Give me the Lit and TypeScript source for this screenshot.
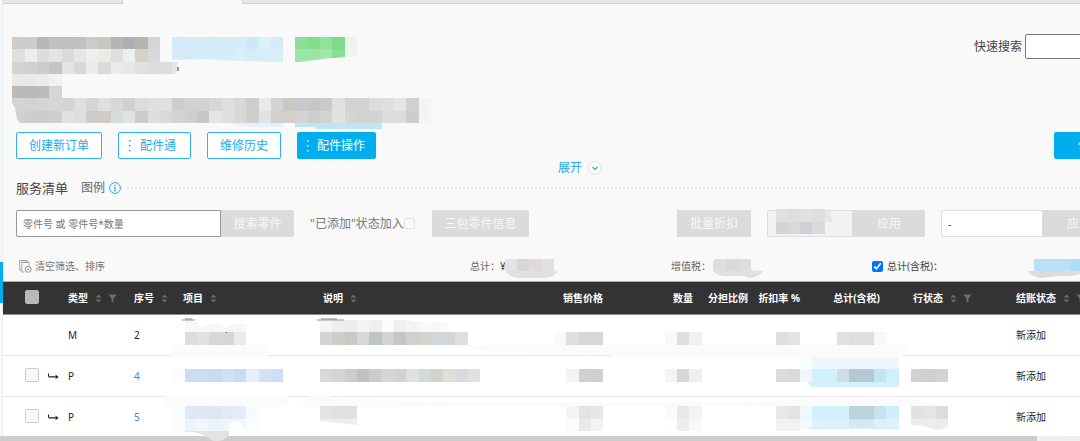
import { LitElement, html, svg, css, nothing } from "lit";
import { customElement, property } from "lit/decorators.js";

/* A strip of mosaic cells: column, row, then one colour per cell. */
type Strip = [number, number, string];

const edge = (n: number) => Math.round(n * 12.31);

const HEAD_STRIPS: Strip[] = [
  [1, 3, "cfcdca c9cdcf b8b7b4 c2c0be bdc0bf c0c1c3 cbcbcb c7c6c1 b6b4b5 acb0b3 b6b5b1 d3d5d7"],
  [1, 4, "dfdfdf ebeeee dddddb e4e4e4 d8dadd e6e6e6 efeeec ebebe8 dfdfdf ebefed d3d1cc d6dadd"],
  [1, 5, "d4d4d3 d1d1d0 cdcdcd c4c4c4 e3e3e1 d7d8db ecebe9 d8dadd e9ebec e7e8e6 e1e1df dcdcdc dcdedd"],
  [1, 6, "e9e9e8 e9e9e9 ebebeb f2f2f2"],
  [1, 7, "bcbab7 b9b8ba bdbbb9 d2d6d6"],
  [1, 8, "d4d4d4 d2d2d2 d4d4d3 d6d6d4 d2d5d5 dedede d5d5d5 dfdfdf d5d8d8 cfd0d2 dedcda dfe0e2 dfe0e2 cfcecd d3d2d1 d3d2d1 d6d7d9 dfdfdd dad8d6 cdcecd e8eae9 d5d4d2 c9c8c6 c8c9cc c6c8c7 cacaca dfe1e0 d3d2d0 d3d2d0 dcdcdc e0dfdd e5e5e5 d2d1cf f3f4f6"],
  [1, 9, "d0d0d0 cdcdcd cdcdcd cfcfcf e2e2e2 dedede cdcccc cecbc9 d9dcdc e1e1de cbccce dfdddb d7d9db d5d4d2 d0cfce c8c8c8 e3e5e7 dfdfdb dad8d6 cfcfcf e0e1e3 d1d0ce d1d0ce d6d4d1 cdcecd d2d3d5 e1e2e2 d6d5d4 d2d2d2 d2d2d2 dcdcda dcdcda cdcdcb f3f4f6"],
  [14, 3, "d3ebf8 d5edf8 d5edf8 d4ebf7 d5edf8 d5edf8 cbeaf6 def1f9 d3ecf8"],
  [14, 4, "d5ecf7 d5ecf7 d5edf8 d5edf8 d5edf8 dbeff9 d5edf8 d5edf8 d7eef8"],
  [24, 3, "8ddf97 84dc8d 93e29c 7edb87 ecf5ed"],
  [24, 4, "9de5a6 9be4a4 a1e6a9 88df92 eff6f0"],
];

const BODY_STRIPS: Strip[] = [
  [63, 17, "e0e0e0 dedede e1e1e1 dfdfdf"],
  [63, 18, "d7d3d2 dbd9d7 ced0d6 d8dadb"],
  [41, 21, "e3e4e6 d7d7d5 dfdad9 dee0e1"],
  [58, 21, "dbe0de d9dad9 dddddd"],
  [84, 21, "b9e0f5 b9e0f5 b9e0f5 aedcf6 cde8f7"],
  [15, 27, "dcdedb e2e2e0 d8d7d6 d8d6d5 e7ebea"],
  [26, 26, "f4f4f4 eeeeee ebeeed f4f4f1 efefef fcfcfc efefef f3f5f5 fafafa f8f8f8 fafafa fcfcfc"],
  [26, 27, "d3d4d3 cdcec6 c9cac3 d4d8d8 bec3c4 d1d2d3 c7c5c1 d0d0d1 d7d2cc d1d6da d5d6d4 dededf"],
  [45, 27, "fafaf8 dfdfdf d6d7d9 d7d8d6"],
  [54, 27, "fbf7f1 dce0e1 f0f2f2"],
  [63, 27, "dedede e3e3e2"],
  [68, 27, "e4e2e0 dedede dededd f6f8f7"],
  [14, 30, "fafcff ccddf3 ccddf3 c8daf2 d1e1f5 c8dbf4 e7eff9 d4e3f4 cddff4"],
  [26, 30, "d8dad9 d7d2d7 cdcdcc c1c1c0 cccccc d6d6d6 d2d2d1 dfe0e1 d5d9d9 d2d1d0 dedfd9 d7dbdf e1e1df"],
  [46, 30, "f3f3ef d0cfd1 cfcfd0"],
  [54, 30, "f5f4f3 d6d8d7 eef0f0"],
  [63, 30, "dcdcdb dadada"],
  [65, 29, "f9fdff ecf8fe ecf8fe ecf8fe ecf8fe ecf8fe ecf8fe ecf8fe"],
  [65, 30, "eef8fe d3f0fd d3f0fd cbdfe4 b3c9d5 b3c9d5 c3e4f0 d0effc"],
  [74, 30, "d1d1d1 d0cfcd d3d3d3"],
  [14, 33, "fafcff dfe8f5 dfe8f5 dde7f3 e2eaf6 e4ecf8 f8fafd"],
  [14, 34, "fafcff edf3fb f3f6fa ecf3fa f0f5fb f3f7fb fafcfe"],
  [26, 33, "e4e3e4 e1e1e0 e0e2e1"],
  [46, 33, "f5f4f2 e2e3e6 e7e8e6"],
  [46, 34, "fbfbf9 e9e9e9 f3f3f3"],
  [54, 33, "fbfaf6 e6e8e9 f3f3f4"],
  [54, 34, "fffefb eeeeef f7f8fa"],
  [63, 33, "e9e8e8 e4e3e4"],
  [63, 34, "f1f1f0 f1f1f0"],
  [65, 33, "eef8fe d3f0fd d3f0fd d3f0fd bdd4dd bdd4dd c3e4f0 d0effc"],
  [65, 34, "f2fafe dcf3fc dcf3fc dcf3fc d5e8f0 d5e8f0 dcf0f8 dcf3fc"],
  [74, 33, "e2e2e0 e5e6e1 dcddde"],
];

const tiles = (strips: Strip[]) =>
  strips.map(([col, row, colours]) =>
    colours.split(" ").map(
      (c, i) => svg`<rect x=${edge(col + i)} y=${edge(row)} width=${edge(col + i + 1) - edge(col + i)}
        height=${edge(row + 1) - edge(row)} fill=${"#" + c}></rect>`
    )
  );

const sorter = html`<svg class="sort" viewBox="0 0 7 9" aria-hidden="true">
  <path d="M3.5 0.5 6.5 3.6H0.5zM3.5 8.6 6.5 5.4H0.5z" fill="#6c6c6c"></path></svg>`;
const funnel = html`<svg class="funnel" viewBox="0 0 9 9" aria-hidden="true">
  <path d="M0.3 0.5H8.7L5.5 4.4V8.6L3.5 7.4V4.4z" fill="#6c6c6c"></path></svg>`;
const dots = html`<svg class="dots" viewBox="0 0 2 12" aria-hidden="true">
  <path d="M0 0h1.5v1.5H0zM0 5h1.5v1.5H0zM0 10h1.5v1.5H0z" fill="currentColor"></path></svg>`;
const branch = html`<svg class="branch" viewBox="0 0 12 8" aria-hidden="true">
  <path d="M1.5 1.5V3.4Q1.5 4.9 3 4.9H10.6" fill="none" stroke="#222" stroke-width="1.1"></path>
  <path d="M8.4 2.4 11.6 4.9 8.4 7.2 9 4.9z" fill="#222"></path></svg>`;

interface Item { type: string; no: string; child: boolean; status: string }

const ITEMS: Item[] = [
  { type: "M", no: "2", child: false, status: "新添加" },
  { type: "P", no: "4", child: true, status: "新添加" },
  { type: "P", no: "5", child: true, status: "新添加" },
];

@customElement("service-table")
export class ServiceTable extends LitElement {
  @property({ attribute: false }) items: Item[] = [];

  static styles = css`
    :host { display: block; background: #fff; }
    table { width: 100%; table-layout: fixed; border-collapse: separate; border-spacing: 0; }
    th, td { box-sizing: border-box; padding: 0; font-size: 10px; text-align: left; vertical-align: middle; white-space: nowrap; }
    th { height: 34px; background: #333; color: #fff; font-weight: 700;
      border-top: 1px solid #adadad; border-bottom: 1px solid #8c8c8c; }
    td { height: 41px; color: #222; border-bottom: 1px solid #e6e6e6; }
    .pick { padding: 0 0 2px 22px; }
    .right { text-align: right; }
    .line { padding-left: 33px; }
    .w-pick { width: 44px; } .w-arrow { width: 21px; } .w-type { width: 66px; }
    .w-no { width: 49px; } .w-item { width: 140px; } .w-desc { width: 180px; }
    .w-price { width: 100px; } .w-qty { width: 90px; } .w-share { width: 55px; }
    .w-rate { width: 52px; } .w-total { width: 80px; } .w-line { width: 136px; }
    .sort { width: 7px; height: 9px; margin-left: 7px; vertical-align: -1px; }
    .funnel { width: 9px; height: 9px; margin-left: 6px; vertical-align: -1px; }
    .branch { display: block; width: 12px; height: 8px; }
    input { appearance: none; display: block; box-sizing: border-box; width: 14px; height: 14px; margin: 0;
      border: 1px solid #ccc; border-radius: 2px; background: #f8f8f8; }
    th input { background: #b8b8b8; border-color: #b8b8b8; }
    a { color: #3a87d9; text-decoration: none; }
  `;

  render() {
    return html`<table>
      <colgroup>
        <col class="w-pick"><col class="w-arrow"><col class="w-type"><col class="w-no"><col class="w-item">
        <col class="w-desc"><col class="w-price"><col class="w-qty"><col class="w-share"><col class="w-rate">
        <col class="w-total"><col class="w-line"><col>
      </colgroup>
      <thead><tr>
        <th class="pick"><input type="checkbox" aria-label="全选"></th><th></th>
        <th>类型${sorter}${funnel}</th>
        <th>序号${sorter}</th>
        <th>项目${sorter}</th>
        <th>说明${sorter}</th>
        <th class="right">销售价格</th>
        <th class="right">数量</th>
        <th class="right">分担比例</th>
        <th class="right">折扣率 %</th>
        <th class="right">总计(含税)</th>
        <th class="line">行状态${sorter}${funnel}</th>
        <th>结账状态${sorter}${funnel}</th>
      </tr></thead>
      <tbody>${this.items.map(
        (it) => html`<tr>
          <td class="pick">${it.child ? html`<input type="checkbox" aria-label=${it.no}>` : nothing}</td>
          <td>${it.child ? branch : nothing}</td>
          <td>${it.type}</td>
          <td>${it.child ? html`<a href="#">${it.no}</a>` : it.no}</td>
          <td></td><td></td><td></td><td></td><td></td><td></td><td></td><td></td>
          <td>${it.status}</td>
        </tr>`
      )}</tbody>
    </table>`;
  }
}

@customElement("app-root")
export class AppRoot extends LitElement {
  static styles = css`
    :host { display: block; position: relative; height: 100vh; overflow: hidden; background: #f9f9f9;
      font-family: "Noto Sans", "Noto Sans CJK SC", sans-serif; font-size: 12px; line-height: 16px; color: #666; }
    * { box-sizing: border-box; }
    .frame { display: flex; flex-direction: column; height: 100%; }
    .body { display: flex; flex: 1; min-height: 0; }
    .rail { flex: none; width: 3px; border-right: 1px solid #e4f1fb; padding-top: 262px; }
    .mark { width: 3px; height: 41px; background: #00aeef; }
    .page { flex: 1; min-width: 1154px; overflow: hidden; }
    .tabs { display: flex; height: 4px; }
    .tab { flex: none; width: 120px; background: #e6e6e6; border: solid #ccd0d5; border-width: 0 1px 1px 0; }
    .rest { flex: 1; margin-left: 119px; background: #e6e6e6; border: solid #ccd0d5; border-width: 0 0 1px 1px; }
    .head { display: flex; justify-content: space-between; align-items: flex-start; margin: 30px 12px 0 9px; }
    .summary { display: block; width: 430px; height: 96px; }
    .quick { display: flex; align-items: center; gap: 3px; color: #444; }
    input, button { font: inherit; }
    .text { height: 27px; border: 1px solid #999; border-radius: 2px; background: #fff; padding: 0 6px; font-size: 10px; min-width: 0; }
    .text::placeholder { color: #777; opacity: 1; }
    .quick .text { width: 120px; height: 25px; border-color: #777; }
    .actions { display: flex; gap: 16px; margin: 2px 12px 0 13px; }
    .btn { display: flex; align-items: center; justify-content: center; gap: 9px; height: 27px; padding: 0 12px;
      border: 1px solid #2cb4ea; border-radius: 2px; background: #fff; color: #1eabe6; white-space: nowrap; }
    .lead { padding: 0 14px 0 10px; }
    .solid { background: #00aeef; border-color: #00aeef; color: #fff; }
    .lead.solid { padding: 0 10px 0 9px; gap: 8px; }
    .save { margin-left: auto; width: 91px; padding: 0 23px; justify-content: flex-start; }
    .dots { width: 2px; height: 12px; }
    .more { display: flex; align-items: center; justify-content: center; height: 18px; }
    .more a { display: flex; align-items: center; gap: 6px; color: #2ea9e0; text-decoration: none; }
    .chev { width: 14px; height: 14px; }
    .title { display: flex; align-items: center; height: 22px; padding-left: 13px; }
    h2 { margin: 0 13px 0 0; font-size: 13px; font-weight: 400; color: #444; }
    .info { width: 12px; height: 12px; margin: 0 6px 0 4px; }
    .rule { flex: 1; height: 2px; background: repeating-linear-gradient(90deg, #e5e5e5 0 2px, transparent 2px 4px); }
    .filters { display: flex; align-items: center; margin: 11px 0 0 13px; }
    .pair { display: flex; }
    .pair .text { border-radius: 2px 0 0 2px; }
    .pair .off { border-radius: 0 2px 2px 0; }
    .part { width: 205px; }
    .off { height: 27px; padding: 0; border: 0; border-radius: 1px; background: #dbdbdb; color: #f8f8f8; white-space: nowrap; }
    .w73 { width: 73px; } .w97 { width: 97px; } .w74 { width: 74px; } .w72 { width: 72px; }
    .join { display: flex; align-items: center; width: 138px; padding-left: 16px; color: #777; white-space: nowrap; }
    .join input { appearance: none; width: 11px; height: 11px; margin: 0; border: 1px solid #e2e2e2; border-radius: 2px; }
    .bulk { display: flex; gap: 16px; margin-left: 148px; }
    .bulk .text { border-color: #ddd; color: #333; }
    .rate { width: 86px; background: #f2f2f2; }
    .state { width: 102px; }
    .totals { display: grid; grid-template-columns: 451px 201px 201px auto; align-items: center;
      height: 22px; margin: 18px 0 4px 16px; font-size: 10px; }
    .clear { display: flex; align-items: center; gap: 3px; border: 0; padding: 0; background: none; color: #777; }
    .clear svg { width: 13px; height: 13px; }
    .yen { color: #333; }
    .tax { display: flex; align-items: center; gap: 4px; color: #444; }
    .tax input { width: 11px; height: 11px; margin: 0; }
    .scroll { flex: none; height: 5px; background: #f0f0f0; }
    .thumb { width: 96%; height: 5px; background: #cdcdcd; }
    .mask { position: absolute; top: 0; left: 0; width: 1080px; height: 441px; pointer-events: none; }
  `;

  render() {
    return html`<div class="frame">
      <div class="body">
        <aside class="rail"><div class="mark"></div></aside>
        <main class="page">
          <div class="tabs"><div class="tab"></div><div class="rest"></div></div>
          <header class="head">
            <svg class="summary" viewBox="12 34 430 96" aria-hidden="true">
              <path d="M295 121H382V129H316V127H295z" fill="#c0e6f6"></path>
              <path d="M225 122H283V127H252Q236 126 225 122z" fill="#e4f2f8"></path>
              ${tiles(HEAD_STRIPS)}
              <path d="M172 61.5V60Q210 58 235 61L284 62V63H172z" fill="#f9f9f9"></path>
              <path d="M300 62 322 59 358 56V63H300z" fill="#f9f9f9"></path>
              <path d="M172 62H178L176 74H172z" fill="#e6e6e6"></path>
              <path d="M177 67h2v4h-2z" fill="#8199bd"></path>
              <path d="M11 101 15 108 17 119 21 124H11z" fill="#f9f9f9"></path>
            </svg>
            <label class="quick">快速搜索<input class="text" type="search"></label>
          </header>
          <div class="actions">
            <button class="btn">创建新订单</button>
            <button class="btn lead">${dots}配件通</button>
            <button class="btn">维修历史</button>
            <button class="btn lead solid">${dots}配件操作</button>
            <button class="btn solid save">保存</button>
          </div>
          <div class="more"><a href="#">展开<svg class="chev" viewBox="0 0 14 14" aria-hidden="true">
            <circle cx="7" cy="7" r="6.4" fill="#fff" stroke="#dedede"></circle>
            <path d="M4.5 6 7 8.4 9.5 6" fill="none" stroke="#2ea9e0" stroke-width="1.2"></path></svg></a></div>
          <div class="title">
            <h2>服务清单</h2><span>图例</span>
            <svg class="info" viewBox="0 0 12 12" aria-hidden="true">
              <circle cx="6" cy="6" r="5.4" fill="none" stroke="#25aee8"></circle>
              <path d="M5.4 2.7h1.3v1.2H5.4zM4.8 4.9H6.6V8.5H7.3V9.3H4.8V8.5H5.5V5.7H4.8z" fill="#25aee8"></path></svg>
            <div class="rule"></div>
          </div>
          <div class="filters">
            <div class="pair"><input class="text part" aria-label="零件号" placeholder="零件号 或 零件号*数量"><button class="off w73">搜索零件</button></div>
            <label class="join">"已添加"状态加入<input type="checkbox"></label>
            <button class="off w97">三包零件信息</button>
            <div class="bulk">
              <button class="off w74">批量折扣</button>
              <div class="pair"><input class="text rate" aria-label="折扣"><button class="off w72">应用</button></div>
              <div class="pair"><input class="text state" aria-label="状态" value="-"><button class="off w72">应用</button></div>
            </div>
          </div>
          <div class="totals">
            <button class="clear"><svg viewBox="0 0 13 13" aria-hidden="true">
              <path d="M2.5 10.2H1.2Q.6 10.2.6 9.6V1.2Q.6.6 1.2.6H7.6Q8.2.6 8.2 1.2V2M5.5 12H3.4Q2.8 12 2.8 11.4V3Q2.8 2.4 3.4 2.4H9.4Q10 2.4 10 3V5.6" fill="none" stroke="#aaa" stroke-width="1.1"></path>
              <circle cx="9.2" cy="9.3" r="3" fill="none" stroke="#999"></circle>
              <path d="M8.1 8.2 10.3 10.4M10.3 8.2 8.1 10.4" stroke="#999" stroke-width=".8"></path></svg>清空筛选、排序</button>
            <span>总计：<span class="yen">¥</span></span>
            <span>增值税：</span>
            <label class="tax"><input type="checkbox" checked>总计(含税)：</label>
          </div>
          <service-table .items=${ITEMS}></service-table>
        </main>
      </div>
      <div class="scroll"><div class="thumb"></div></div>
      <svg class="mask" viewBox="0 0 1080 441" aria-hidden="true">
        <path d="M505 262 510 259H520V271H555L557 272Q553 278 543 278H518Q508 277 505 270z" fill="#e0e0e0"></path>
        <path d="M713 262 716 259V270H752L763 271Q758 278 749 278L742 276H724Q715 275 713 270z" fill="#e0e0e0"></path>
        <path d="M1028 271H1080V274Q1070 277 1060 276L1040 278Q1030 276 1028 271z" fill="#dcdcdc"></path>
        <path d="M825 211 830 211 833 222H825z" fill="#e6e6e6"></path>
        <path d="M171 345H266L268 357H171z" fill="#fbfbfb"></path>
        <path d="M164 396H289L286 407H167z" fill="#fbfbfb"></path>
        <path d="M611 345H907Q906 353 900 357H611z" fill="#fbfbfb"></path>
        <path d="M420 345H611V354L490 352z" fill="#fbfbfb"></path>
        <path d="M310 395H331V398L450 402H740L810 399 900 397 946 407H300z" fill="#fbfbfb"></path>
        <path d="M331 396.5H900" stroke="#e6e6e6"></path>
        <path d="M185 321H195Q200 324 201 328Q215 319 225 328L233 324H246V333H185z" fill="#f7f7f7"></path>
        ${tiles(BODY_STRIPS)}
        <path d="M410 320H470V332H448V323L410 321z" fill="#fff"></path>
        <path d="M182 320H195M317 320H344" stroke="#c8c8c8" stroke-width="2"></path>
        <path d="M185 319H192M321 319H337" stroke="#8a8a8a"></path>
        <path d="M226 332h1v1h-1z" fill="#555"></path>
        <path d="M808 382H899V387H811z" fill="#d3f0fd"></path>
        <path d="M810 427H899V429H811z" fill="#d3f0fd"></path>
        <path d="M800 429H902V432H800z" fill="#fff"></path>
        <path d="M320 419H357V425L338 423 320 421z" fill="#eeeeee"></path>
        <path d="M911 419H948V426Q944 430 936 430L924 426 911 425z" fill="#ececeb"></path>
        <path d="M229 431V424Q236 417 242 425L247 431z" fill="#fff"></path>
        <path d="M178 431H229V435Q224 441 217 441T204 435L193 432z" fill="#e3e3e3"></path>
      </svg>
    </div>`;
  }
}
